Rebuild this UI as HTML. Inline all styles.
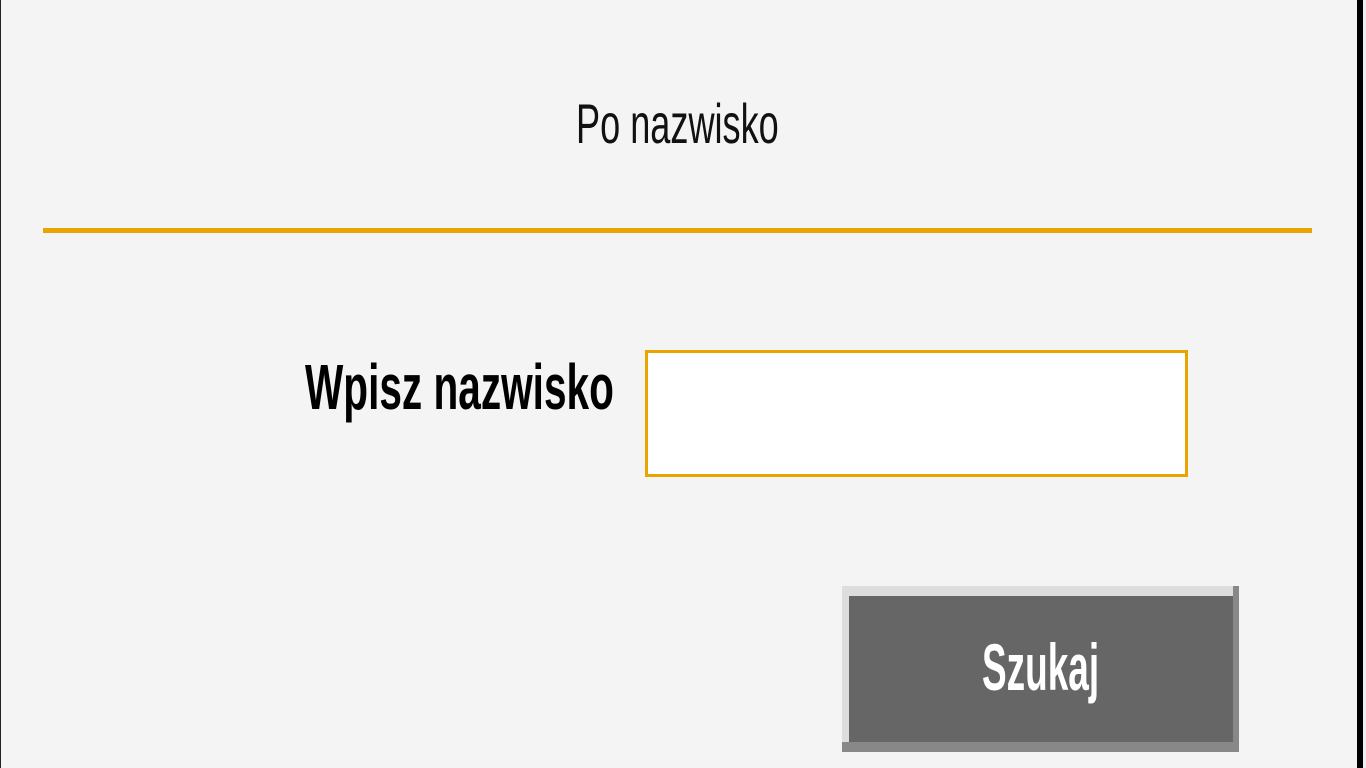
<!DOCTYPE html>
<html><head><meta charset="utf-8"><style>
html,body{margin:0;padding:0;}
body{width:1366px;height:768px;background:#f4f4f4;position:relative;overflow:hidden;font-family:"Liberation Sans",sans-serif;}
.t{position:absolute;white-space:nowrap;transform-origin:0 0;line-height:1;}
</style></head><body>
<div style="position:absolute;left:0;top:0;width:1px;height:768px;background:#222"></div>
<div style="position:absolute;left:1357px;top:0;width:6px;height:768px;background:#000"></div>
<div style="position:absolute;left:1363px;top:0;width:3px;height:768px;background:#eceef2"></div>
<div class="t" style="left:576px;top:96px;font-size:56px;color:#111;transform:scaleX(0.645)">Po nazwisko</div>
<div style="position:absolute;left:43px;top:228px;width:1269px;height:5px;background:#e8a500"></div>
<div class="t" style="left:305px;top:355px;font-size:64px;font-weight:bold;color:#000;transform:scaleX(0.634)">Wpisz nazwisko</div>
<div style="position:absolute;left:645px;top:350px;width:537px;height:121px;border:3px solid #e8a500;background:#fff"></div>
<div style="position:absolute;left:842px;top:586px;width:397px;height:166px;background:#888"></div>
<div style="position:absolute;left:842px;top:586px;width:391px;height:156px;background:#ddd"></div>
<div style="position:absolute;left:849px;top:596px;width:384px;height:146px;background:#666"></div>
<div class="t" style="left:982px;top:634px;font-size:66px;font-weight:bold;color:#fff;transform:scaleX(0.56)">Szukaj</div>
</body></html>
